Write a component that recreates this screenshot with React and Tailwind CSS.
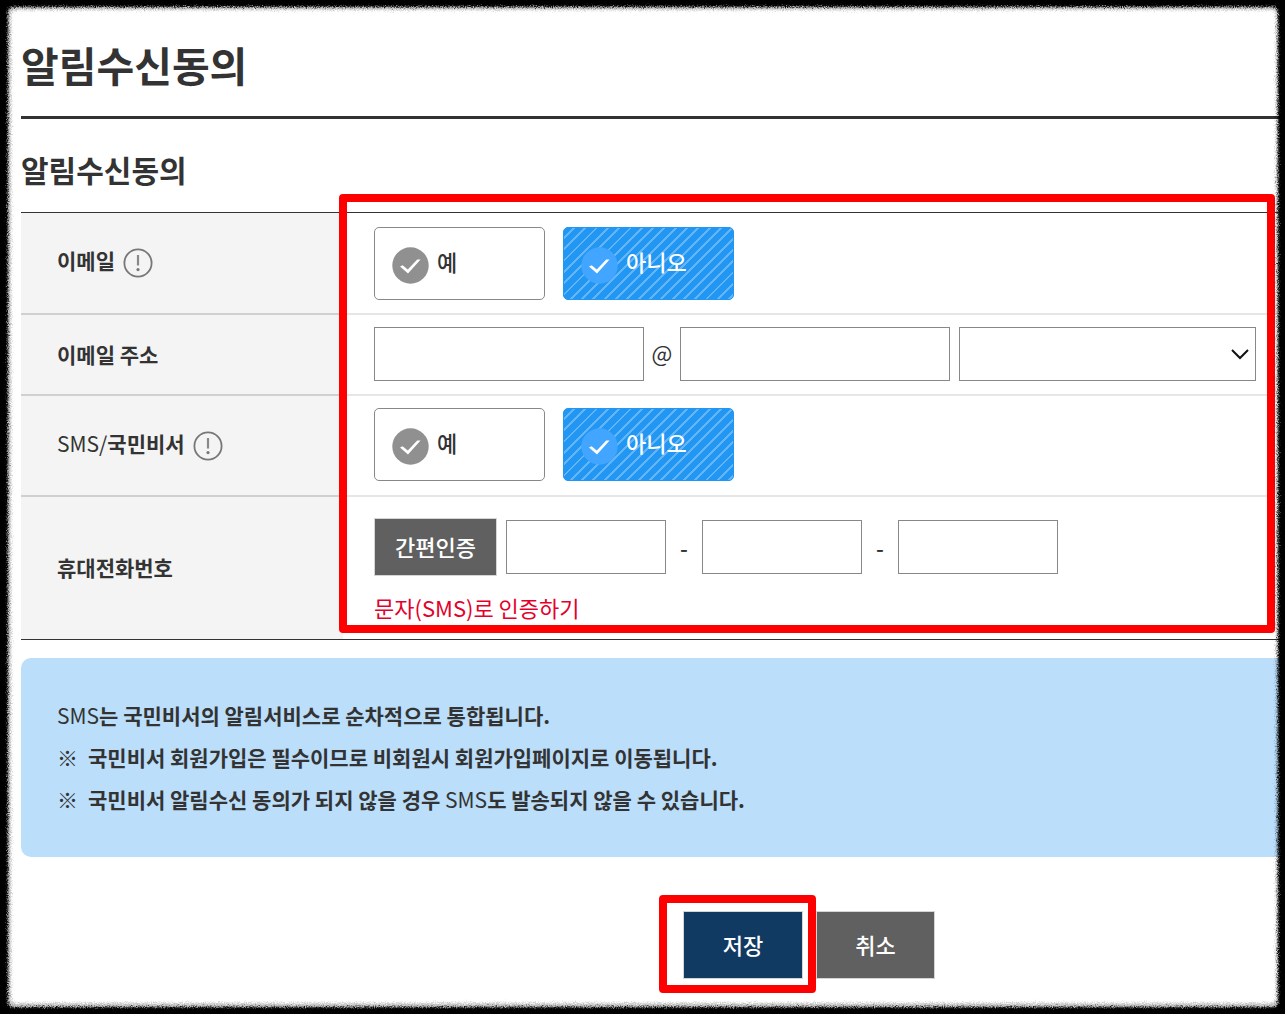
import { useState } from "react";

function CheckCircle({ color }) {
  return (
    <svg width="37" height="37" viewBox="0 0 37 37" fill="none" aria-hidden="true">
      <circle cx="18.5" cy="18.5" r="18.2" fill={color} />
      <path d="M8 19.6l2.6-1.4 5.2 4.4 9.4-10.2h3.4L16 26.6z" fill="#fff" />
    </svg>
  );
}

function InfoIcon() {
  return (
    <svg width="30" height="30" viewBox="0 0 30 30" fill="none" aria-hidden="true">
      <circle cx="15" cy="15" r="13.6" stroke="#777" strokeWidth="1.8" />
      <path d="M15 7v10.5" stroke="#888" strokeWidth="2.2" />
      <circle cx="15" cy="21.6" r="1.6" fill="#777" />
    </svg>
  );
}

function InfoButton({ label }) {
  return (
    <button type="button" aria-label={label} className="mt-1 flex">
      <InfoIcon />
    </button>
  );
}

function Choice({ name, label, checked, onChange }) {
  return (
    <label
      className={`flex h-[73px] w-[171px] cursor-pointer items-center gap-2 rounded-[5px] border pl-[17px] text-[22px] font-medium ${
        checked
          ? "border-[#2196f3] bg-[#2196f3] bg-[repeating-linear-gradient(135deg,transparent_0px,transparent_6px,#64b5f8_6px,#64b5f8_8px)] text-white"
          : "border-[#888] bg-white text-[#333]"
      }`}
    >
      <input type="radio" name={name} checked={checked} onChange={onChange} className="sr-only" />
      <span className="mt-1">
        <CheckCircle color={checked ? "#42a5ff" : "#909090"} />
      </span>
      <span className="pb-1">{label}</span>
    </label>
  );
}

function YesNo({ name, value, onChange }) {
  return (
    <div className="flex gap-[18px]">
      <Choice name={name} label="예" checked={value === "Y"} onChange={() => onChange("Y")} />
      <Choice name={name} label="아니오" checked={value === "N"} onChange={() => onChange("N")} />
    </div>
  );
}

function Row({ label, info, size, last, children }) {
  return (
    <tr>
      <th
        scope="row"
        className={`w-[322px] bg-[#f4f4f4] pl-9 text-left text-[21px] font-bold ${
          last ? "" : "border-b-2 border-[#d0d0d0]"
        }`}
      >
        <div className={`flex items-center gap-2 ${info ? "pb-1" : ""}`}>
          <span>{label}</span>
          {info && <InfoButton label={info} />}
        </div>
      </th>
      <td className={`pl-[31px] align-top ${size} ${last ? "" : "border-b-2 border-[#e6e6e6]"}`}>{children}</td>
    </tr>
  );
}

// Torn black edge round the whole page
function RoughEdge() {
  return (
    <svg className="pointer-events-none absolute inset-0 h-full w-full" aria-hidden="true">
      <defs>
        <filter id="soft" x="-5%" y="-5%" width="110%" height="110%">
          <feGaussianBlur stdDeviation="1" result="b" />
          <feTurbulence type="fractalNoise" baseFrequency="0.9" numOctaves="2" seed="4" />
          <feDisplacementMap in="b" scale="7" xChannelSelector="R" yChannelSelector="G" />
        </filter>
        <filter id="torn" x="-5%" y="-5%" width="110%" height="110%">
          <feGaussianBlur stdDeviation="0.8" result="b" />
          <feTurbulence type="fractalNoise" baseFrequency="0.9" numOctaves="2" seed="9" />
          <feDisplacementMap in="b" scale="6" xChannelSelector="R" yChannelSelector="G" />
        </filter>
        <mask id="outerSoft">
          <rect x="-30" y="-30" width="110%" height="110%" fill="#fff" />
          <svg x="11" y="10" width="100%" height="100%" overflow="visible">
            <rect className="h-[calc(100%-21px)] w-[calc(100%-20px)]" rx="5" fill="#000" />
          </svg>
        </mask>
        <mask id="outerTorn">
          <rect x="-30" y="-30" width="110%" height="110%" fill="#fff" />
          <svg x="8" y="7" width="100%" height="100%" overflow="visible">
            <rect className="h-[calc(100%-14px)] w-[calc(100%-15px)]" rx="5" fill="#000" />
          </svg>
        </mask>
      </defs>
      <g filter="url(#soft)">
        <rect x="-20" y="-20" width="105%" height="105%" fill="#000" fillOpacity="0.22" mask="url(#outerSoft)" />
      </g>
      <g filter="url(#torn)">
        <rect x="-20" y="-20" width="105%" height="105%" fill="#000" mask="url(#outerTorn)" />
      </g>
    </svg>
  );
}

export default function App() {
  const [email, setEmail] = useState("N");
  const [sms, setSms] = useState("N");

  const field = "h-[54px] border border-[#888] bg-white px-3 text-[21px]";
  const button = "border border-[#d5d5d5] pb-0.5 text-[22px] font-medium text-white";

  return (
    <div className="relative min-h-screen overflow-hidden bg-white pl-[21px] font-['Noto_Sans_CJK_KR','Noto_Sans',sans-serif] text-[#333]">
      <h1 className="h-[119px] border-b-3 border-[#333] pt-[34px] text-[41px] leading-[60px] font-bold">
        알림수신동의
      </h1>

      <form onSubmit={(e) => e.preventDefault()}>
        <h2 className="h-[93px] pt-[28px] text-[30px] leading-[44px] font-bold">알림수신동의</h2>

        <div className="relative">
          <table className="w-full border-separate border-spacing-0 border-y border-[#333]">
            <tbody>
              <Row label="이메일" info="이메일 안내" size="h-[102px] pt-[14px]">
                <YesNo name="email" value={email} onChange={setEmail} />
              </Row>

              <Row label="이메일 주소" size="h-[81px] pt-3">
                <div className="flex items-center pr-[29px]">
                  <input type="text" aria-label="이메일 아이디" className={`${field} w-[270px]`} />
                  <span className="w-9 pb-1 text-center text-[22px]">@</span>
                  <input type="text" aria-label="이메일 도메인" className={`${field} w-[270px]`} />
                  <div className="relative ml-[9px] flex-1">
                    <select aria-label="도메인 선택" className={`${field} block w-full appearance-none`}>
                      <option></option>
                    </select>
                    <svg
                      className="pointer-events-none absolute top-[21px] right-[6px]"
                      width="20"
                      height="13"
                      viewBox="0 0 20 13"
                      fill="none"
                      aria-hidden="true"
                    >
                      <path d="M2 2l8 8 8-8" stroke="#111" strokeWidth="2" />
                    </svg>
                  </div>
                </div>
              </Row>

              <Row
                label={
                  <>
                    <span className="font-normal">SMS/</span>국민비서
                  </>
                }
                info="SMS/국민비서 안내"
                size="h-[101px] pt-3"
              >
                <YesNo name="sms" value={sms} onChange={setSms} />
              </Row>

              <Row label="휴대전화번호" size="h-[142px] pt-[21px]" last>
                <div className="flex items-center">
                  <button type="button" className={`${button} mr-[9px] h-[58px] w-[123px] bg-[#606060]`}>
                    간편인증
                  </button>
                  <input type="tel" aria-label="휴대전화 앞자리" className={`${field} w-[160px]`} />
                  <span className="w-9 text-center text-[22px] font-medium">-</span>
                  <input type="tel" aria-label="휴대전화 가운데자리" className={`${field} w-[160px]`} />
                  <span className="w-9 text-center text-[22px] font-medium">-</span>
                  <input type="tel" aria-label="휴대전화 끝자리" className={`${field} w-[160px]`} />
                </div>
                <a href="#sms" className="mt-[15px] block text-[22px] leading-8 text-[#e4002b]">
                  문자(SMS)로 인증하기
                </a>
              </Row>
            </tbody>
          </table>
          <div className="pointer-events-none absolute -top-[18px] right-[10px] bottom-[7px] left-[318px] rounded-[4px] border-8 border-[#f00]" />
        </div>

        <div className="mt-[18px] rounded-l-[10px] bg-[#bbdefb] px-9 pt-9 pb-[37px] text-[21px] leading-[42px] font-bold">
          <p>
            <span className="font-normal">SMS</span>는 국민비서의 알림서비스로 순차적으로 통합됩니다.
          </p>
          <p className="flex gap-[10px]">
            <span>※</span>국민비서 회원가입은 필수이므로 비회원시 회원가입페이지로 이동됩니다.
          </p>
          <p className="flex gap-[10px]">
            <span>※</span>
            <span>
              국민비서 알림수신 동의가 되지 않을 경우 <span className="font-normal">SMS</span>도 발송되지 않을 수
              있습니다.
            </span>
          </p>
        </div>

        <div className="mt-[54px] flex justify-center gap-[13px] pb-[35px] pl-[312px]">
          <div className="relative">
            <button type="submit" className={`${button} block h-[68px] w-[120px] bg-[#113a63]`}>
              저장
            </button>
            <div className="pointer-events-none absolute -top-4 -right-[13px] -bottom-[14px] -left-6 rounded-[4px] border-8 border-[#f00]" />
          </div>
          <button type="button" className={`${button} h-[68px] w-[119px] bg-[#606060]`}>
            취소
          </button>
        </div>
      </form>

      <RoughEdge />
    </div>
  );
}
